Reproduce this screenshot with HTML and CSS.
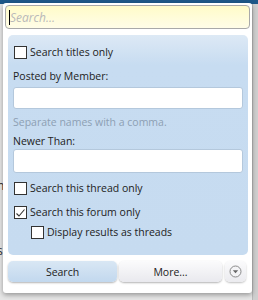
FILE: index.html
```html
<!DOCTYPE html>
<html lang="en">

<head>
    <meta charset="UTF-8">
    <title>Search</title>
    <link rel="stylesheet" href="styles.css">
</head>

<body>
    <div class="page">
        <div class="topbar"></div>
        <div class="sidebar"></div>
        <span class="behind b1">n</span>
        <span class="behind b2">s</span>

        <!-- search popup menu -->
        <div class="popup">
            <div class="search">
                <span class="caret"></span>
                <span class="placeholder">Search...</span>
            </div>

            <div class="panel">
                <div class="check first"><span class="box"></span>Search titles only</div>

                <div class="label first-label">Posted by Member:</div>
                <div class="field"></div>
                <div class="hint">Separate names with a comma.</div>

                <div class="label">Newer Than:</div>
                <div class="field tall"></div>

                <div class="check thread"><span class="box"></span>Search this thread only</div>
                <div class="check checked"><span class="box">
                    <svg width="11" height="10" viewBox="0 0 11 10"><path d="M1.5 5.5 L4 8 L9.5 1.5" fill="none" stroke="#333" stroke-width="1.1"/></svg>
                </span>Search this forum only</div>
                <div class="check sub"><span class="box"></span>Display results as threads</div>
            </div>

            <div class="buttons">
                <div class="btn primary">Search</div>
                <div class="btn">More...</div>
                <div class="round">
                    <svg width="13" height="13" viewBox="0 0 13 13">
                        <circle cx="6.5" cy="6.5" r="5.5" fill="#f4f4f6" stroke="#8a8a8a" stroke-width="1"/>
                        <path d="M3.8 5.3 L9.2 5.3 L6.5 8.3 Z" fill="#666"/>
                    </svg>
                </div>
            </div>
        </div>
    </div>
</body>

</html>
```

FILE: styles.css
```css
body {
    margin: 0;
    font-family: "Open Sans", "Noto Sans", sans-serif;
    font-size: 10.5px;
    color: #222;
}

.page {
    position: relative;
    width: 258px;
    height: 300px;
    background: #e6e6e6;
    overflow: hidden;
}

/* header behind the popup */
.topbar {
    height: 4px;
    background: #1e5889;
}

.sidebar {
    position: absolute;
    top: 4px;
    right: 0;
    width: 5px;
    height: 296px;
    background: #cfcfcf;
    border-left: 1px solid #b8b8b8;
}

.behind {
    position: absolute;
    left: -3px;
    font-size: 12px;
    color: #333;
}

.b1 {
    top: 177px;
}

.b2 {
    top: 242px;
}

.popup {
    position: absolute;
    top: 3px;
    left: 3px;
    width: 249px;
    height: 290px;
    box-sizing: border-box;
    padding: 2px 2px 0;
    background: #fff;
    border-radius: 3px;
    box-shadow: 0 2px 5px rgba(0, 0, 0, .35);
}

.search {
    display: flex;
    align-items: center;
    height: 24px;
    box-sizing: border-box;
    border: 1px solid #a9a9a9;
    border-radius: 4px;
    background: linear-gradient(#fffbc8, #fffde8);
    padding-left: 3px;
}

.caret {
    width: 1px;
    height: 15px;
    background: #000;
}

.placeholder {
    font-style: italic;
    font-size: 12px;
    color: #b9b9b9;
}

.panel {
    margin: 6px 2px 0 3px;
    height: 220px;
    box-sizing: border-box;
    padding: 11px 5px 0 5px;
    border-radius: 5px;
    background: linear-gradient(#dde9f5, #c7dcf1 30px, #c6dbf0);
}

.check {
    display: flex;
    align-items: center;
    height: 13px;
    line-height: 13px;
}

.check.thread {
    margin-top: 9px;
}

.check.checked {
    margin-top: 11px;
}

.check.sub {
    margin-top: 7px;
    padding-left: 17px;
}

.box {
    display: flex;
    align-items: center;
    justify-content: center;
    width: 11px;
    height: 11px;
    margin: 0 3px 0 1px;
    border: 1px solid #333;
    background: #fff;
}

.label {
    margin-top: 5px;
    line-height: 14px;
}

.label.first-label {
    margin-top: 10px;
}

.field {
    height: 22px;
    box-sizing: border-box;
    margin-top: 4px;
    border: 1px solid #b4c8dc;
    border-radius: 3px;
    background: #fff;
}

.field.tall {
    height: 24px;
    margin-top: 1px;
}

.hint {
    margin-top: 6px;
    line-height: 14px;
    color: #8d9fb3;
}

.buttons {
    display: flex;
    margin: 6px 0 0 3px;
    height: 21px;
}

.btn {
    display: flex;
    align-items: center;
    justify-content: center;
    width: 103px;
    border-radius: 5px;
    background: linear-gradient(#fbfbfc, #e9e9ee);
    box-shadow: 0 1px 2px rgba(0, 0, 0, .3);
    margin-left: 2px;
}

.btn.primary {
    width: 109px;
    margin-left: 0;
    background: linear-gradient(#d9e7f4, #c2d8ee);
}

.round {
    display: flex;
    align-items: center;
    justify-content: center;
    width: 21px;
    margin-left: 3px;
    border-radius: 5px;
    background: linear-gradient(#fbfbfc, #ebebef);
    box-shadow: 0 1px 2px rgba(0, 0, 0, .25);
}
```
